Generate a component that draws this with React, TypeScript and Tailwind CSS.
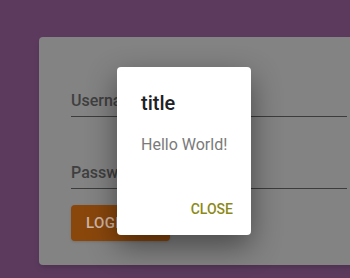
import React from "react";

const App = () => {
  return (
    <div
      className="relative h-[278px] w-[350px] overflow-hidden bg-[#5b3a5e] pl-[39px] pt-[37px]"
      style={{ fontFamily: "Roboto, 'Liberation Sans', sans-serif" }}
    >
      {/* Login card (dimmed by the dialog backdrop) */}
      <div className="h-[228px] w-[340px] rounded-[4px] bg-[#838383] px-[32px] pt-[54px] shadow-md">
        <div className="border-b border-[#3c3c3c] pb-[5px]">
          <div className="text-[16px] font-medium leading-[20px] text-[#3f3f3f]">Username</div>
        </div>
        <div className="mt-[46px] border-b border-[#3c3c3c] pb-[5px]">
          <div className="text-[16px] font-medium leading-[20px] text-[#3f3f3f]">Password</div>
        </div>
        <button className="mt-[16px] flex h-[36px] w-[99px] items-center rounded-[4px] bg-[#8a470c] pl-[15px] text-[15px] font-medium tracking-wide text-[#cfb6a6] shadow">
          LOGIN
        </button>
      </div>

      {/* Dialog */}
      <div className="absolute left-[117px] top-[67px] flex h-[168px] w-[134px] flex-col rounded-[4px] bg-white px-[24px] shadow-[0_11px_30px_rgba(0,0,0,0.45)]">
        <div className="mt-[24px] text-[20px] font-medium leading-[24px] text-[#1e2126]">title</div>
        <div className="mt-[20px] whitespace-nowrap text-[16px] leading-[20px] text-[#7a7a7a]">Hello World!</div>
        <div className="mt-auto mb-[16px] flex justify-end">
          <span className="mr-[-6px] text-[14px] font-medium leading-[20px] text-[#8b8a18]">CLOSE</span>
        </div>
      </div>
    </div>
  );
};

export default App;
